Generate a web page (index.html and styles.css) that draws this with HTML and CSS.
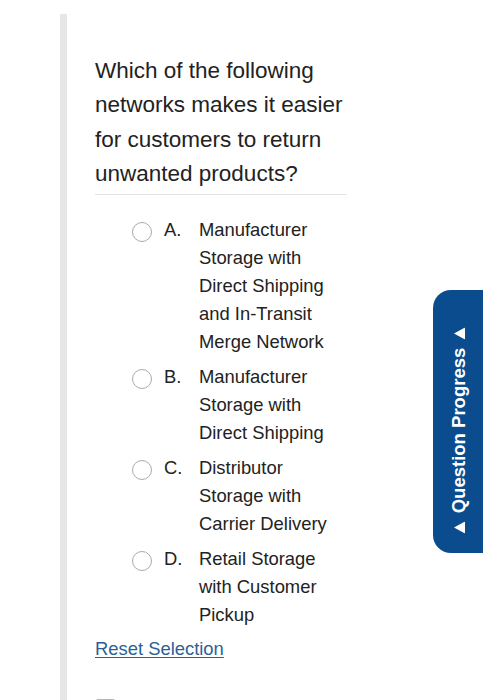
FILE: index.html
```html
<!DOCTYPE html>
<html lang="en">
<head>
<meta charset="utf-8">
<title>Question</title>
<link rel="stylesheet" href="styles.css">
</head>
<body>
<main class="page">
  <p class="question">Which of the following networks makes it easier for customers to return unwanted products?</p>
  <div class="options">
    <label class="option"><span class="radio"></span><span class="letter">A.</span><span class="text">Manufacturer Storage with Direct Shipping and In-Transit Merge Network</span></label>
    <label class="option"><span class="radio"></span><span class="letter">B.</span><span class="text">Manufacturer Storage with Direct Shipping</span></label>
    <label class="option"><span class="radio"></span><span class="letter">C.</span><span class="text">Distributor Storage with Carrier Delivery</span></label>
    <label class="option"><span class="radio"></span><span class="letter">D.</span><span class="text">Retail Storage with Customer Pickup</span></label>
  </div>
  <a class="reset" href="#">Reset Selection</a>
  <div class="review"><span class="checkbox"></span><span class="review-text">Mark this question for review</span></div>
</main>
<aside class="tab">
  <div class="tab-inner">
    <svg class="tri" width="12" height="11" viewBox="0 0 12 11"><polygon points="6,0 12,11 0,11" fill="#fff"/></svg>
    <span class="tab-label">Question Progress</span>
    <svg class="tri" width="12" height="11" viewBox="0 0 12 11"><polygon points="6,0 12,11 0,11" fill="#fff"/></svg>
  </div>
</aside>
</body>
</html>
```
FILE: styles.css
```css
html, body {
  margin: 0;
  padding: 0;
  background: #fff;
}
body {
  font-family: "Liberation Sans", Arial, sans-serif;
  color: #222;
  height: 700px;
  overflow: hidden;
  position: relative;
}
.page {
  margin: 14px 0 0 60px;
  border-left: 7px solid #e6e6e6;
  padding: 40px 0 0 28px;
  min-height: 700px;
}
.question {
  margin: 0;
  width: 252px;
  font-size: 22.5px;
  line-height: 34.3px;
  padding-bottom: 3px;
  border-bottom: 1px solid #e3e3e3;
}
.options {
  margin-top: 21px;
  padding-left: 37px;
  display: flex;
  flex-direction: column;
  gap: 7px;
}
.option {
  display: flex;
  align-items: flex-start;
  font-size: 18.4px;
  line-height: 28px;
}
.radio {
  flex: none;
  width: 20px;
  height: 20px;
  box-sizing: border-box;
  border: 1.5px solid #ababab;
  border-radius: 50%;
  margin-top: 6px;
  margin-right: 12px;
}
.letter {
  flex: none;
  width: 35px;
}
.text {
  width: 132px;
}
.reset {
  display: inline-block;
  margin-top: 6px;
  font-size: 18.4px;
  line-height: 28px;
  color: #2c5f96;
  text-decoration: underline;
  text-underline-offset: 2px;
}
.review {
  margin-top: 36px;
  display: flex;
  align-items: flex-start;
  gap: 12px;
}
.checkbox {
  width: 21px;
  height: 21px;
  box-sizing: border-box;
  border: 1.5px solid #b5b5b5;
  border-radius: 3px;
}
.review-text {
  font-size: 18px;
  line-height: 22px;
  margin-top: 4px;
  color: #555;
}
.tab {
  position: absolute;
  right: 0;
  top: 290px;
  width: 50px;
  height: 263px;
  background: #0b4c8f;
  border-radius: 18px 0 0 18px;
}
.tab-inner {
  position: absolute;
  left: 50%;
  top: 50%;
  width: 263px;
  height: 50px;
  box-sizing: border-box;
  padding-right: 17px;
  padding-top: 2px;
  transform: translate(-50%, -50%) rotate(-90deg);
  display: flex;
  align-items: center;
  justify-content: center;
  gap: 8px;
  color: #fff;
  font-weight: bold;
  font-size: 18.5px;
}
.tri {
  display: block;
}
```
